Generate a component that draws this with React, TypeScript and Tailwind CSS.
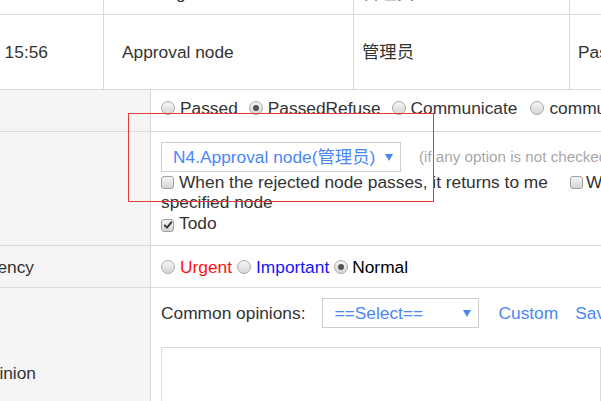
const blue = "text-[#4a86f7]";

function Radio({ checked = false }: { checked?: boolean }) {
  return (
    <span className="relative inline-block h-[14px] w-[14px] shrink-0 rounded-full border border-[#a9a9a9] bg-linear-to-b from-[#f6f6f6] to-[#d6d6d6]">
      {checked && (
        <span className="absolute left-[3px] top-[3px] h-[6px] w-[6px] rounded-full bg-[#555]" />
      )}
    </span>
  );
}

function Checkbox({ checked = false, className = "" }: { checked?: boolean; className?: string }) {
  return (
    <span
      className={`inline-flex h-[13px] w-[13px] items-center justify-center rounded-[3px] border border-[#a0a0a0] bg-linear-to-b from-[#f6f6f6] to-[#d4d4d4] align-[-1px] ${className}`}
    >
      {checked && (
        <svg viewBox="0 0 12 12" className="h-[10px] w-[10px]" aria-hidden>
          <path d="M2 6.5 4.8 9.2 10 2.8" fill="none" stroke="#333" strokeWidth="2.2" strokeLinecap="round" strokeLinejoin="round" />
        </svg>
      )}
    </span>
  );
}

function Arrow() {
  return (
    <svg viewBox="0 0 8 7" className="h-[7px] w-[8px] shrink-0" aria-hidden>
      <path d="M0 0h8L4 7z" fill="#4a86f7" />
    </svg>
  );
}

function Option({ label, checked = false }: { label: string; checked?: boolean }) {
  return (
    <span className="flex items-center gap-[5px]">
      <Radio checked={checked} />
      <span>{label}</span>
    </span>
  );
}

export default function App() {
  return (
    <div className="relative h-[401px] w-[601px] overflow-hidden bg-white font-['Liberation_Sans','Noto_Sans_CJK_SC',sans-serif] text-[17.33px] leading-[20px] text-[#333]">
      <div className="w-[1000px]">
        {/* record table */}
        <div className="flex h-[15px] border-b border-[#d9d9d9]">
          <div className="w-[104px] border-r border-[#d9d9d9]" />
          <div className="relative w-[250px] border-r border-[#d9d9d9]">
            <span className="absolute left-[18px] top-[-17px] whitespace-nowrap">Sending</span>
          </div>
          <div className="relative w-[216px] border-r border-[#d9d9d9]">
            <span className="absolute left-[8px] top-[-17px] whitespace-nowrap">管理员</span>
          </div>
          <div className="flex-1" />
        </div>
        <div className="flex h-[75px] border-b border-[#d9d9d9]">
          <div className="flex w-[104px] items-center border-r border-[#d9d9d9]">
            <div className="flex w-[48px] justify-end whitespace-nowrap">2020-05-20 15:56</div>
          </div>
          <div className="flex w-[250px] items-center border-r border-[#d9d9d9] pl-[18px]">Approval node</div>
          <div className="flex w-[216px] items-center border-r border-[#d9d9d9] pl-[8px]">管理员</div>
          <div className="flex flex-1 items-center pl-[8px]">Passed</div>
        </div>

        {/* form */}
        <div className="flex h-[42px] border-b border-[#d9d9d9]">
          <div className="w-[151px] border-r border-[#d9d9d9] bg-[#f5f5f5]" />
          <div className="flex flex-1 items-start gap-[11px] pl-[10px] pt-[8px]">
            <Option label="Passed" />
            <Option label="PassedRefuse" checked />
            <Option label="Communicate" />
            <span className="ml-[2px]">
              <Option label="communicate back" />
            </span>
          </div>
        </div>

        <div className="flex h-[114px] border-b border-[#d9d9d9]">
          <div className="w-[151px] border-r border-[#d9d9d9] bg-[#f5f5f5]" />
          <div className="flex-1 pl-[10px] pr-[10px] pt-[10px]">
            <div className="flex items-center">
              <div className={`flex h-[30px] w-[240px] items-center justify-between border border-[#cfcfcf] pl-[11px] pr-[7px] ${blue}`}>
                <span className="whitespace-nowrap">N4.Approval node(管理员)</span>
                <Arrow />
              </div>
              <span className="ml-[18px] whitespace-nowrap text-[15.2px] text-[#a8a8a8]">
                (if any option is not checked, the default is not to be handled)
              </span>
            </div>
            <div className="w-[829px]">
              <Checkbox className="mr-[5px]" />
              When the rejected node passes, it returns to me
              <Checkbox className="ml-[22px] mr-[3px]" />
              When the rejected node passes, it returns to the specified node
            </div>
            <div className="mt-[1px]">
              <Checkbox checked className="mr-[5px]" />
              Todo
            </div>
          </div>
        </div>

        <div className="flex h-[42px] border-b border-[#d9d9d9]">
          <div className="flex w-[151px] items-center border-r border-[#d9d9d9] bg-[#f5f5f5]">
            <div className="flex w-[34px] justify-end whitespace-nowrap">Urgency</div>
          </div>
          <div className="flex flex-1 items-center gap-[5px] pl-[10px]">
            <span className="flex items-center gap-[5px] text-[#ff1010]">
              <Radio />
              Urgent
            </span>
            <span className="flex items-center gap-[5px] text-[#1414ff]">
              <Radio />
              Important
            </span>
            <span className="flex items-center gap-[4px] text-black">
              <Radio checked />
              Normal
            </span>
          </div>
        </div>

        <div className="flex h-[140px]">
          <div className="w-[151px] border-r border-[#d9d9d9] bg-[#f5f5f5] pt-[75px]">
            <div className="flex w-[36px] justify-end whitespace-nowrap">Opinion</div>
          </div>
          <div className="flex-1 pl-[10px] pt-[10px]">
            <div className="flex items-center">
              <span className="whitespace-nowrap">Common opinions:</span>
              <div className={`ml-[17px] flex h-[30px] w-[157px] items-center justify-between border border-[#cfcfcf] pl-[11px] pr-[7px] ${blue}`}>
                <span>==Select==</span>
                <Arrow />
              </div>
              <a className={`ml-[19px] ${blue}`}>Custom</a>
              <a className={`ml-[17px] ${blue}`}>Save</a>
            </div>
            <div className="mt-[19px] h-[100px] w-[440px] border border-[#dcdcdc]" />
          </div>
        </div>
      </div>

      {/* annotation */}
      <div className="absolute left-[128px] top-[113px] h-[89px] w-[306px] border border-[#e53935]" />
    </div>
  );
}
